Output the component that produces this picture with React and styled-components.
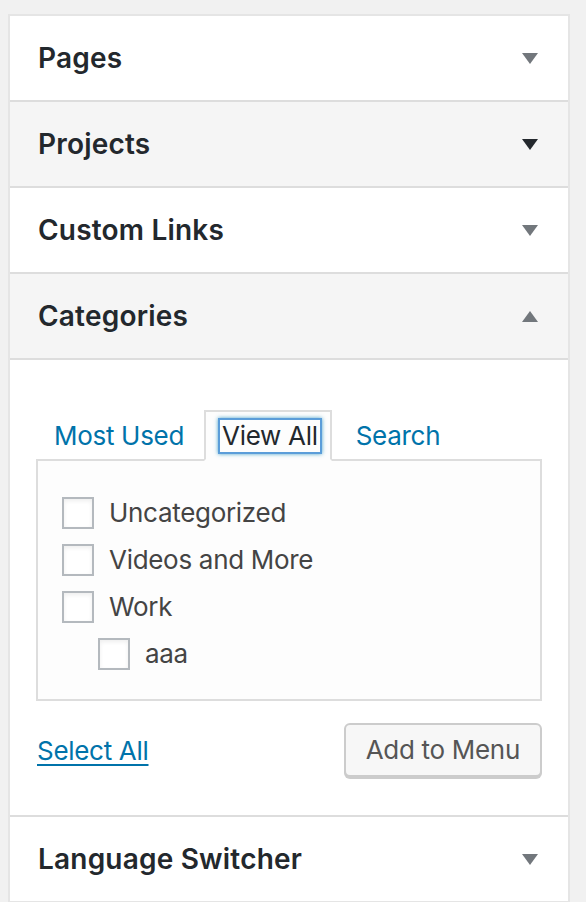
import React from 'react';
import styled, { createGlobalStyle } from 'styled-components';

const GlobalStyle = createGlobalStyle`
  body {
    margin: 0;
    background: #f1f1f1;
    font-family: Inter, "Noto Sans", "Liberation Sans", sans-serif;
  }
  * { box-sizing: border-box; }
`;

const Page = styled.div`
  padding: 14px 16px 0 8px;
`;

const Accordion = styled.div`
  width: 562px;
  background: #fff;
  border: 2px solid #e5e5e5;
`;

const Section = styled.div`
  border-bottom: 2px solid #ddd;

  &:last-child {
    border-bottom: none;
  }
`;

const Header = styled.h3`
  margin: 0;
  height: 84px;
  padding: 0 30px 0 28px;
  display: flex;
  align-items: center;
  justify-content: space-between;
  background: ${(p) => (p.$shaded ? '#f5f5f5' : '#fff')};
  font-size: 28px;
  font-weight: 600;
  color: #23282d;
  letter-spacing: 0.2px;
`;

const Content = styled.div`
  padding: 50px 26px 38px 26px;
  border-top: 2px solid #ddd;
  letter-spacing: -0.3px;
`;

const TabList = styled.ul`
  list-style: none;
  margin: 0 0 -2px 0;
  padding: 0;
  display: flex;
  position: relative;
  z-index: 1;
`;

const Tab = styled.li`
  margin-right: 6px;
  padding: 8px 10px 7px 14px;
  border: 2px solid ${(p) => (p.$active ? '#ddd' : 'transparent')};
  border-bottom-color: ${(p) => (p.$active ? '#fdfdfd' : 'transparent')};
  background: ${(p) => (p.$active ? '#fdfdfd' : 'transparent')};
`;

const TabLink = styled.a`
  display: block;
  padding: 0 2px;
  line-height: 32px;
  font-size: 26px;
  color: ${(p) => (p.$focused ? '#23282d' : '#0073aa')};
  text-decoration: none;
  box-shadow: ${(p) =>
    p.$focused ? '0 0 0 2px #5b9dd9, 0 0 4px 2px rgba(30, 140, 190, 0.8)' : 'none'};
`;

const Panel = styled.div`
  height: 242px;
  border: 2px solid #ddd;
  background: #fdfdfd;
  padding: 28px 24px 0 24px;
`;

const CheckList = styled.ul`
  list-style: none;
  margin: 0;
  padding: 0;
`;

const Item = styled.li`
  height: 47px;
  display: flex;
  align-items: center;
  padding-left: ${(p) => (p.$depth ? p.$depth * 36 : 0)}px;
`;

const Check = styled.input`
  appearance: none;
  margin: 0 15px 0 0;
  width: 32px;
  height: 32px;
  border: 2px solid #b4b9be;
  background: #fff;
  box-shadow: inset 0 2px 4px rgba(0, 0, 0, 0.07);
`;

const Label = styled.label`
  font-size: 26px;
  color: #444;
`;

const Footer = styled.div`
  margin-top: 22px;
  display: flex;
  align-items: center;
  justify-content: space-between;
`;

const SelectAll = styled.a`
  margin-left: 1px;
  font-size: 26px;
  color: #0073aa;
  text-decoration: underline;
  text-underline-offset: 4px;
  text-decoration-thickness: 2px;
`;

const Button = styled.button`
  height: 54px;
  padding: 0 20px 2px;
  border: 2px solid #ccc;
  border-radius: 6px;
  background: #f7f7f7;
  box-shadow: 0 2px 0 #ccc;
  font-family: inherit;
  font-size: 26px;
  letter-spacing: -0.3px;
  color: #555;
`;

function Arrow({ up, dark }) {
  return (
    <svg width="16" height="11" viewBox="0 0 16 11">
      <path
        d={up ? 'M0 11 L8 0 L16 11 Z' : 'M0 0 L16 0 L8 11 Z'}
        fill={dark ? '#23282d' : '#72777c'}
      />
    </svg>
  );
}

const items = [
  { name: 'Uncategorized', depth: 0 },
  { name: 'Videos and More', depth: 0 },
  { name: 'Work', depth: 0 },
  { name: 'aaa', depth: 1 },
];

export default function App() {
  return (
    <Page>
      <GlobalStyle />
      <Accordion>
        <Section>
          <Header>
            Pages
            <Arrow />
          </Header>
        </Section>
        <Section>
          <Header $shaded>
            Projects
            <Arrow dark />
          </Header>
        </Section>
        <Section>
          <Header>
            Custom Links
            <Arrow />
          </Header>
        </Section>
        <Section>
          <Header $shaded>
            Categories
            <Arrow up />
          </Header>
          <Content>
            <TabList>
              <Tab>
                <TabLink href="#">Most Used</TabLink>
              </Tab>
              <Tab $active>
                <TabLink href="#" $focused>View All</TabLink>
              </Tab>
              <Tab>
                <TabLink href="#">Search</TabLink>
              </Tab>
            </TabList>
            <Panel>
              <CheckList>
                {items.map((it) => (
                  <Item key={it.name} $depth={it.depth}>
                    <Check type="checkbox" id={`cat-${it.name}`} />
                    <Label htmlFor={`cat-${it.name}`}>{it.name}</Label>
                  </Item>
                ))}
              </CheckList>
            </Panel>
            <Footer>
              <SelectAll href="#">Select All</SelectAll>
              <Button type="button">Add to Menu</Button>
            </Footer>
          </Content>
        </Section>
        <Section>
          <Header>
            Language Switcher
            <Arrow />
          </Header>
        </Section>
      </Accordion>
    </Page>
  );
}
